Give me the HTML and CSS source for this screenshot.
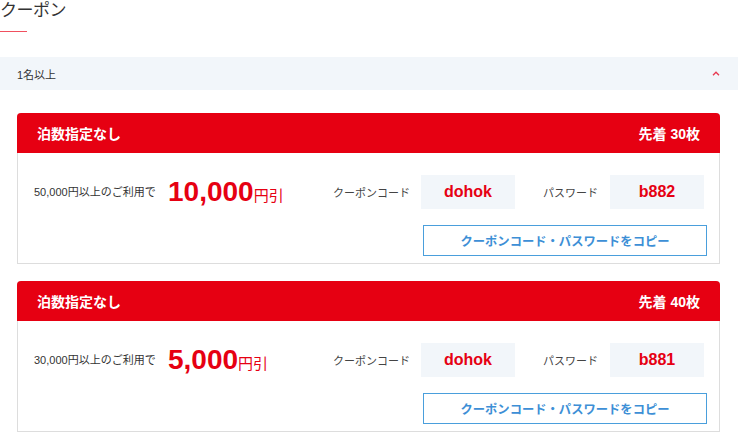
FILE: index.html
```html
<!DOCTYPE html>
<html lang="ja">

<head>
    <meta charset="UTF-8">
    <meta name="viewport" content="width=device-width, initial-scale=1.0">
    <title>クーポン</title>
    <link rel="stylesheet" href="styles.css">
</head>

<body>
    <div class="page">
        <h2 class="page-title">クーポン</h2>
        <div class="title-line"></div>

        <div class="accordion-head">
            <span>1名以上</span>
            <svg class="caret" width="8" height="5" viewBox="0 0 8 5">
                <path d="M1 4.2 L4 1.2 L7 4.2" fill="none" stroke="#e8384f" stroke-width="1.3" />
            </svg>
        </div>

        <div class="coupon-list">
            <div class="coupon">
                <div class="coupon-head">
                    <span>泊数指定なし</span>
                    <span>先着 30枚</span>
                </div>
                <div class="coupon-body">
                    <div class="coupon-row">
                        <p class="condition">50,000円以上のご利用で</p>
                        <p class="discount"><span class="num">10,000</span>円引</p>
                        <div class="codes">
                            <span class="code-label">クーポンコード</span>
                            <span class="code-box">dohok</span>
                            <span class="code-label pass">パスワード</span>
                            <span class="code-box">b882</span>
                        </div>
                    </div>
                    <button class="copy-button">クーポンコード・パスワードをコピー</button>
                </div>
            </div>

            <div class="coupon">
                <div class="coupon-head">
                    <span>泊数指定なし</span>
                    <span>先着 40枚</span>
                </div>
                <div class="coupon-body">
                    <div class="coupon-row">
                        <p class="condition">30,000円以上のご利用で</p>
                        <p class="discount"><span class="num">5,000</span>円引</p>
                        <div class="codes">
                            <span class="code-label">クーポンコード</span>
                            <span class="code-box">dohok</span>
                            <span class="code-label pass">パスワード</span>
                            <span class="code-box">b881</span>
                        </div>
                    </div>
                    <button class="copy-button">クーポンコード・パスワードをコピー</button>
                </div>
            </div>
        </div>
    </div>
</body>

</html>
```

FILE: styles.css
```css
body,
html {
    margin: 0;
    background: #ffffff;
    font-family: "Liberation Sans", "Noto Sans CJK JP", sans-serif;
    color: #333333;
}

.page {
    width: 738px;
}

.page-title {
    margin: 0;
    height: 31px;
    font-size: 17px;
    font-weight: normal;
    line-height: 22px;
    color: #333333;
    letter-spacing: -0.5px;
}

/* red line under the title */
.title-line {
    width: 27px;
    height: 0;
    border-top: 1px solid #f0505f;
}

.accordion-head {
    margin-top: 25px;
    height: 33px;
    background: #f2f6fa;
    display: flex;
    align-items: center;
    justify-content: space-between;
    padding: 0 18px 0 17px;
    font-size: 11px;
}

.coupon-list {
    padding: 23px 18px 0 17px;
    display: flex;
    flex-direction: column;
    gap: 17px;
}

.coupon {
    border: 1px solid #dddddd;
    border-top: none;
    border-radius: 4px 4px 0 0;
}

.coupon-head {
    background: #e60012;
    color: #ffffff;
    height: 40px;
    margin: 0 -1px;
    border-radius: 4px 4px 0 0;
    display: flex;
    align-items: center;
    justify-content: space-between;
    padding: 0 20px;
    font-size: 14px;
    font-weight: bold;
}

.coupon-body {
    padding: 22px 15px 7px 16px;
    display: flex;
    flex-direction: column;
    align-items: flex-end;
    gap: 16px;
}

.coupon-row {
    width: 100%;
    display: flex;
    align-items: center;
}

.condition {
    margin: 0 0 2px 0;
    width: 134px;
    font-size: 11px;
    color: #333333;
}

.discount {
    margin: 0;
    color: #e60012;
    font-size: 15px;
}

.discount .num {
    font-size: 28px;
    font-weight: bold;
    font-family: "Liberation Sans", sans-serif;
}

.codes {
    margin-left: auto;
    display: flex;
    align-items: center;
}

.code-label {
    width: 88px;
    font-size: 11px;
    color: #444444;
}

.code-label.pass {
    width: 67px;
    margin-left: 28px;
}

.code-box {
    width: 94px;
    height: 34px;
    background: #f2f6fa;
    color: #e60012;
    font-size: 16px;
    font-weight: bold;
    display: flex;
    align-items: center;
    justify-content: center;
}

.copy-button {
    width: 284px;
    height: 31px;
    margin-right: -3px;
    background: #ffffff;
    border: 1px solid #4a9fdc;
    color: #3d8fd6;
    font-family: "Noto Sans CJK JP", sans-serif;
    font-size: 12.3px;
    font-weight: bold;
    cursor: pointer;
}
```
